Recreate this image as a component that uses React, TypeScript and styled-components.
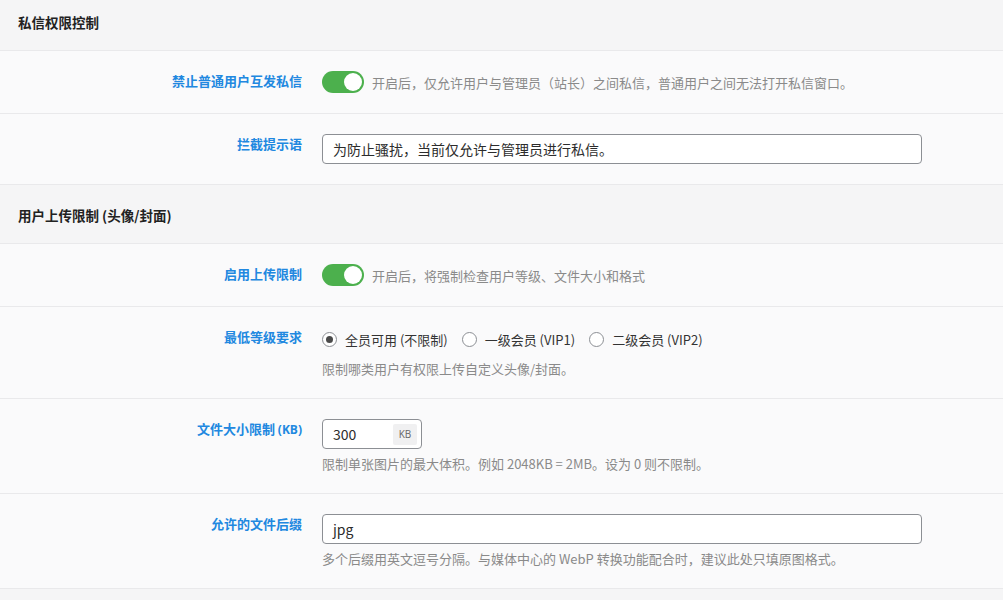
import { FC, ReactNode } from "react";
import styled, { createGlobalStyle } from "styled-components";

const GlobalStyle = createGlobalStyle`
  body {
    margin: 0;
    background: #f5f5f6;
    font-family: "Noto Sans CJK SC", "Noto Sans", sans-serif;
    font-size: 13px;
    color: #333;
  }
`;

interface FieldProps {
  label: ReactNode;
  children: ReactNode;
}

const Field: FC<FieldProps> = ({ label, children }) => (
  <Row>
    <Label>{label}</Label>
    <Control>{children}</Control>
  </Row>
);

const Toggle: FC<{ text: string }> = ({ text }) => (
  <ToggleLine>
    <Switch>
      <Knob />
    </Switch>
    <Desc>{text}</Desc>
  </ToggleLine>
);

const levels = ["全员可用 (不限制)", "一级会员 (VIP1)", "二级会员 (VIP2)"];

const App: FC = () => {
  return (
    <Page>
      <GlobalStyle />

      <SectionHeader $first>私信权限控制</SectionHeader>
      <Field label="禁止普通用户互发私信">
        <Toggle text="开启后，仅允许用户与管理员（站长）之间私信，普通用户之间无法打开私信窗口。" />
      </Field>
      <Field label="拦截提示语">
        <TextInput>为防止骚扰，当前仅允许与管理员进行私信。</TextInput>
      </Field>

      <SectionHeader>用户上传限制 (头像/封面)</SectionHeader>
      <Field label="启用上传限制">
        <Toggle text="开启后，将强制检查用户等级、文件大小和格式" />
      </Field>
      <Field label="最低等级要求">
        <RadioGroup>
          {levels.map((level, i) => (
            <RadioItem key={level}>
              <Radio $checked={i === 0} />
              {level}
            </RadioItem>
          ))}
        </RadioGroup>
        <Help $gap={8}>限制哪类用户有权限上传自定义头像/封面。</Help>
      </Field>
      <Field
        label={
          <>
            文件大小限制 <Unit>(KB)</Unit>
          </>
        }
      >
        <TextInput $width={100}>
          300
          <Addon>KB</Addon>
        </TextInput>
        <Help>限制单张图片的最大体积。例如 2048KB = 2MB。设为 0 则不限制。</Help>
      </Field>
      <Field label="允许的文件后缀">
        <TextInput>jpg</TextInput>
        <Help>多个后缀用英文逗号分隔。与媒体中心的 WebP 转换功能配合时，建议此处只填原图格式。</Help>
      </Field>

      <Tail />
    </Page>
  );
};

const Page = styled.div`
  display: flex;
  flex-direction: column;
  min-height: 600px;
`;

const SectionHeader = styled.div<{ $first?: boolean }>`
  padding: ${(p) => (p.$first ? "12px" : "20px")} 18px 18px;
  line-height: 20px;
  font-size: 13.5px;
  font-weight: 700;
  color: #222;
  background: #f5f5f6;
  border-bottom: 1px solid #e9e9eb;
`;

const Row = styled.div`
  display: grid;
  grid-template-columns: 302px 1fr;
  column-gap: 20px;
  padding: 20px 0;
  background: #fafafb;
  border-bottom: 1px solid #e9e9eb;
`;

const Label = styled.div`
  text-align: right;
  line-height: 20px;
  font-weight: 700;
  color: #2188e0;
`;

const Unit = styled.span`
  font-family: "Open Sans", "Noto Sans CJK SC", sans-serif;
  font-size: 12px;
`;

const Control = styled.div`
  display: flex;
  flex-direction: column;
  align-items: flex-start;
`;

const ToggleLine = styled.div`
  display: flex;
  align-items: center;
  gap: 8px;
  height: 22px;
`;

const Switch = styled.div`
  position: relative;
  width: 42px;
  height: 22px;
  border-radius: 11px;
  background: #4cb04d;
`;

const Knob = styled.div`
  position: absolute;
  top: 2px;
  right: 2px;
  width: 18px;
  height: 18px;
  border-radius: 50%;
  background: #fff;
`;

const Desc = styled.span`
  color: #8a8a8a;
  font-size: 13px;
`;

const TextInput = styled.div<{ $width?: number }>`
  box-sizing: border-box;
  display: flex;
  align-items: center;
  justify-content: space-between;
  width: ${(p) => (p.$width ? `${p.$width}px` : "600px")};
  height: 30px;
  padding: 0 4px 0 10px;
  background: #fff;
  border: 1px solid #8c8f94;
  border-radius: 4px;
  font-size: 14px;
  color: #2c2c2c;
`;

const Addon = styled.span`
  display: flex;
  align-items: center;
  justify-content: center;
  width: 24px;
  height: 21px;
  background: #f0f0f1;
  border-radius: 2px;
  font-family: "Open Sans", sans-serif;
  font-size: 10px;
  color: #666;
`;

const RadioGroup = styled.div`
  display: flex;
  align-items: center;
  gap: 14px;
  height: 25px;
`;

const RadioItem = styled.label`
  display: flex;
  align-items: center;
  gap: 8px;
  color: #333;
  font-size: 13px;
`;

const Radio = styled.span<{ $checked?: boolean }>`
  box-sizing: border-box;
  display: flex;
  align-items: center;
  justify-content: center;
  width: 15px;
  height: 15px;
  border: 1px solid #8c8f94;
  border-radius: 50%;
  background: #fff;

  &::after {
    content: "";
    display: ${(p) => (p.$checked ? "block" : "none")};
    width: 7px;
    height: 7px;
    border-radius: 50%;
    background: #4a4a4a;
  }
`;

const Help = styled.div<{ $gap?: number }>`
  margin-top: ${(p) => p.$gap ?? 6}px;
  line-height: 18px;
  font-size: 13px;
  color: #8a8a8a;
`;

const Tail = styled.div`
  flex: 1;
  background: #f5f5f6;
`;

export default App;
